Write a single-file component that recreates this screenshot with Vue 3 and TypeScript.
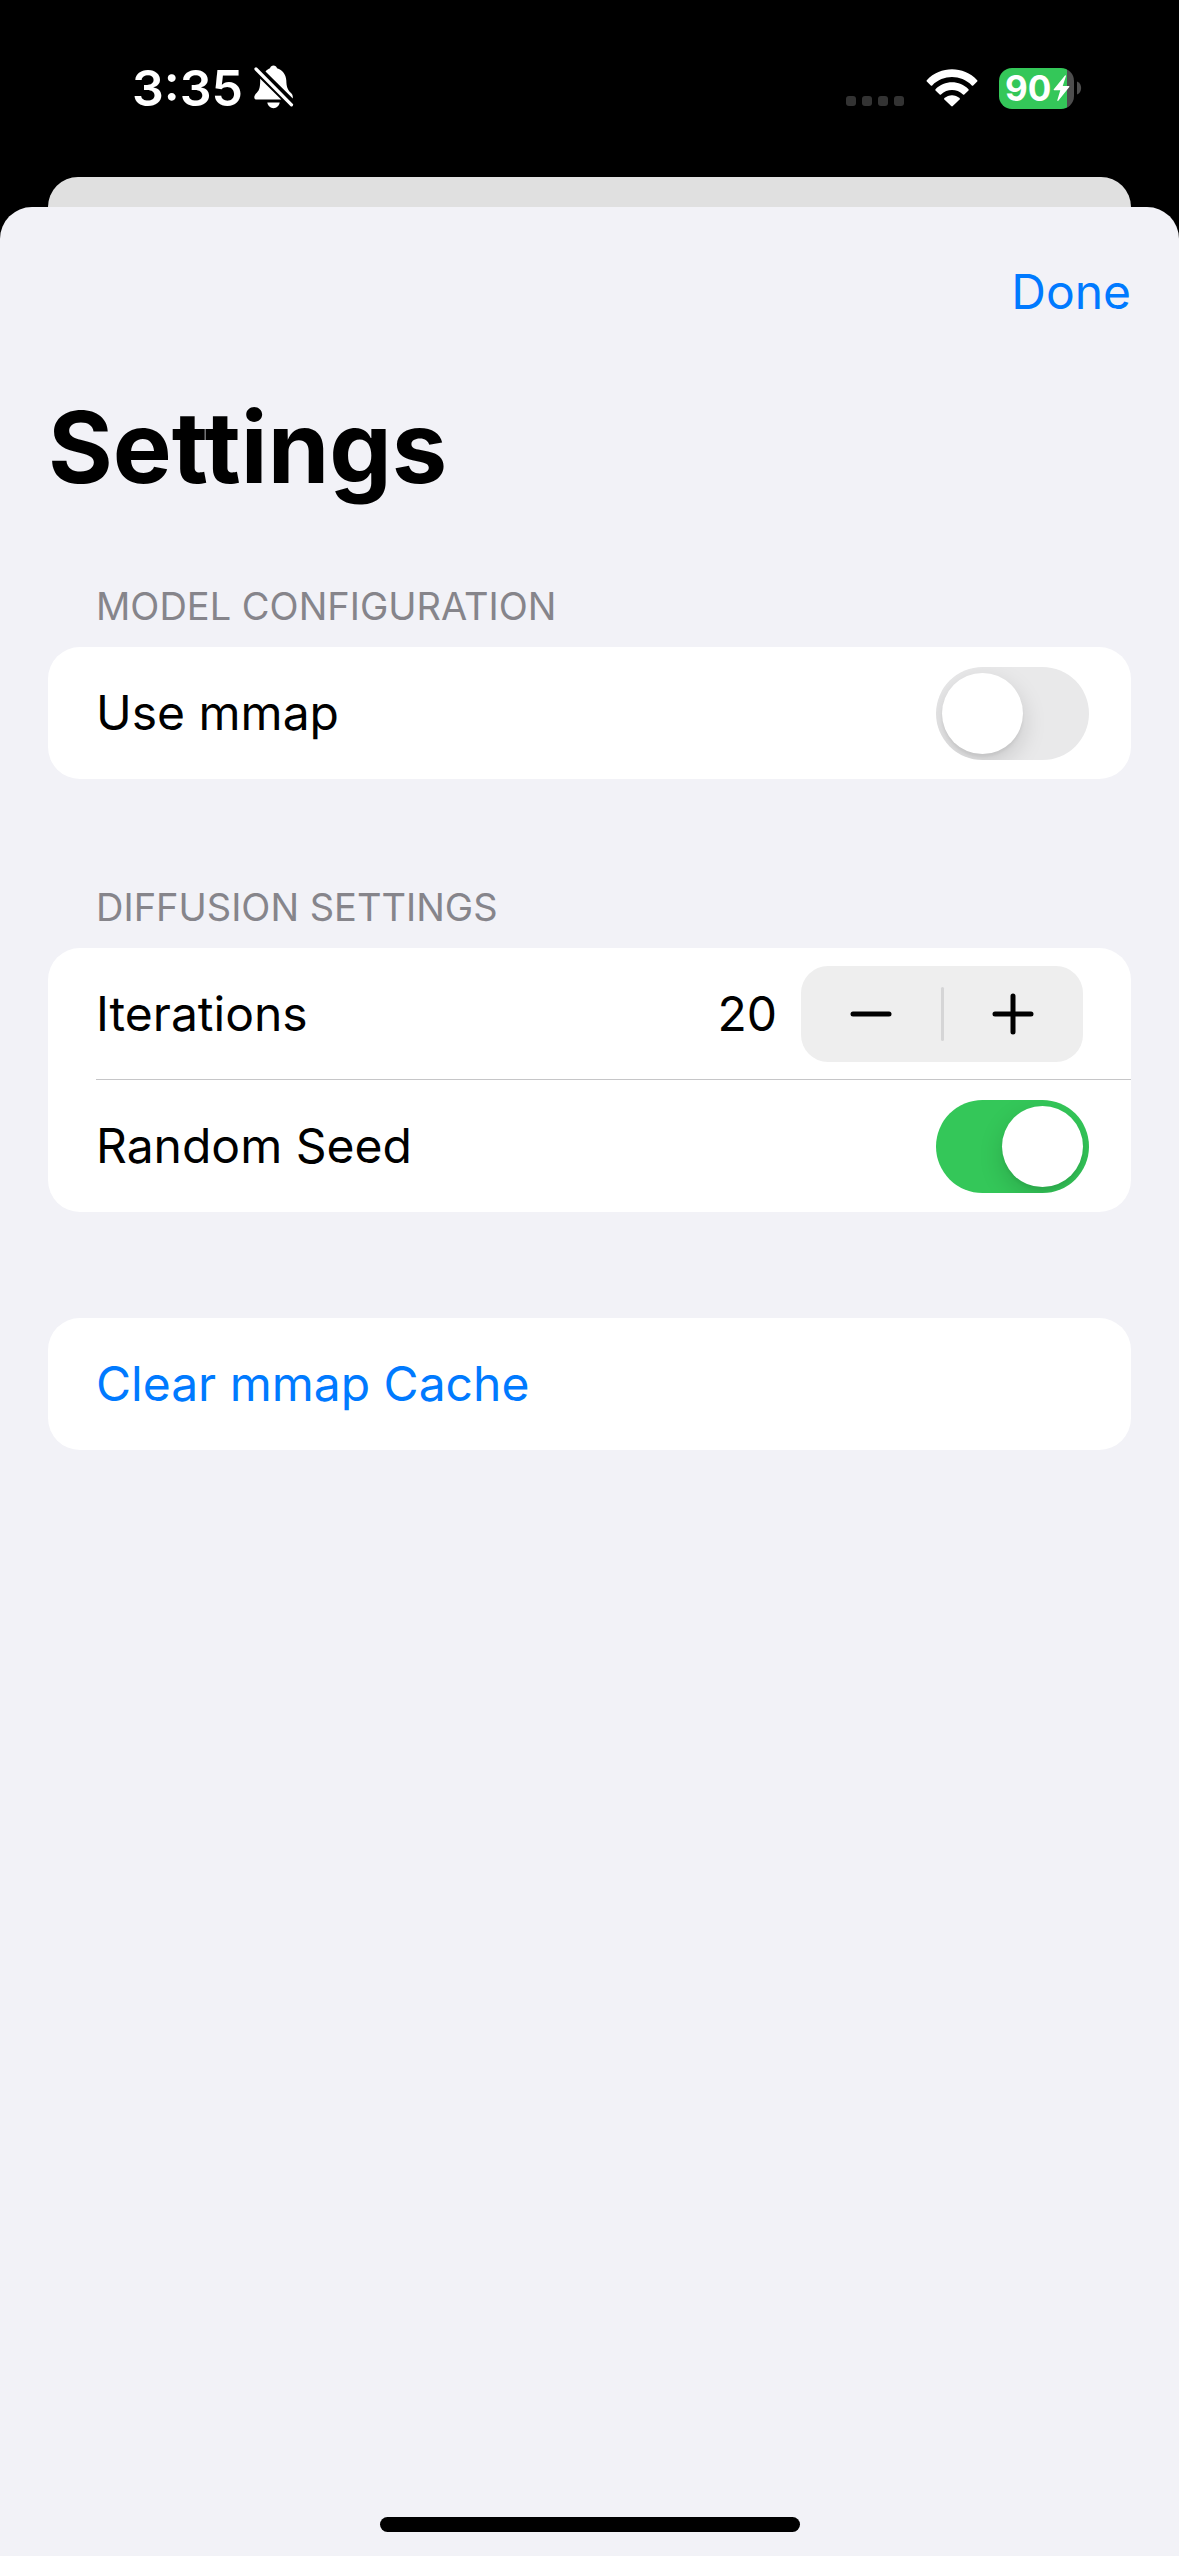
<script setup lang="ts">
import { ref } from 'vue'

const useMmap = ref(false)
const iterations = ref(20)
const randomSeed = ref(true)

function step(delta: number) {
  iterations.value = Math.max(1, iterations.value + delta)
}
</script>

<template>
  <div class="screen">
    <header class="status">
      <div class="status-left">
        <time class="clock">3:35</time>
        <svg class="bell" width="42" height="46" viewBox="0 0 42 46" aria-label="Silent mode">
          <path d="M12.500 6.500C14 4.800 15.500 3.900 17 3.300C17.500 1.500 18.800.600 20.500.600S23.500 1.500 24 3.300C29.500 5 33 9.500 33.300 15.500C33.500 22 34.500 24.500 37.500 27.500C39 29 39.800 30 39.800 32V33.400Z" fill="#fff" />
          <path d="M7.200 13.800L28.200 34.600H4C2 34.600 1.300 33.500 1.300 32.200C1.300 30.500 2.300 29.300 3.800 27.800C6.800 24.800 7.200 21.500 7.200 13.800Z" fill="#fff" />
          <path d="M14.300 37.600H26.700C26.200 41 23.500 43.200 20.500 43.200S14.800 41 14.300 37.600Z" fill="#fff" />
          <path d="M3 4L38.500 39.800" stroke="#fff" stroke-width="3.200" stroke-linecap="round" />
        </svg>
      </div>
      <div class="status-right">
        <div class="dots" aria-hidden="true"><i></i><i></i><i></i><i></i></div>
        <svg class="wifi" width="52" height="38" viewBox="0 0 52 38" aria-label="Wi-Fi">
          <path d="M.800 11.200C14.500-3.300 37.500-3.300 51.200 11.200Q51.700 11.900 51.200 12.500L47.200 16.400Q46.500 17 45.800 16.400C34.700 5.300 17.300 5.300 6.200 16.400Q5.500 17 4.800 16.400L.800 12.500Q.300 11.900.800 11.200Z" fill="#fff" />
          <path d="M9.500 20.200C18.500 11 33.500 11 42.500 20.200Q43 20.900 42.500 21.500L38.300 25.500Q37.600 26 37 25.500C30.800 19.600 21.200 19.600 15 25.500Q14.400 26 13.700 25.500L9.500 21.500Q9 20.900 9.500 20.200Z" fill="#fff" />
          <path d="M18.400 29.100C22.800 25.200 29.200 25.200 33.600 29.100Q34.200 29.800 33.600 30.400L26.800 37.100Q26 37.800 25.200 37.100L18.400 30.400Q17.800 29.800 18.400 29.100Z" fill="#fff" />
        </svg>
        <div class="battery">
          <div class="cell">
            <span class="level">90</span>
            <svg width="17" height="27" viewBox="0 0 17 27" aria-label="Charging">
              <path d="M12 .500L.800 14.200Q.200 15.300 1.300 15.300H7.300L4.300 25.300Q4.300 26.400 5.300 25.800L16.300 12.100Q16.800 11 15.800 11H9.700L13 1Q12.900 0 12 .500Z" fill="#fff" />
            </svg>
          </div>
          <svg class="nub" width="5" height="14" viewBox="0 0 5 14"><path d="M0 .500C5.500 2.500 5.500 11.500 0 13.500Z" fill="#4d4d4d" /></svg>
        </div>
      </div>
    </header>

    <div class="behind"></div>

    <main class="sheet">
      <nav class="toolbar">
        <button type="button" class="done">Done</button>
      </nav>
      <h1>Settings</h1>

      <section class="group">
        <h2>MODEL CONFIGURATION</h2>
        <div class="card">
          <div class="row">
            <label for="use-mmap">Use mmap</label>
            <input id="use-mmap" v-model="useMmap" class="switch" type="checkbox" role="switch" />
          </div>
        </div>
      </section>

      <section class="group">
        <h2>DIFFUSION SETTINGS</h2>
        <div class="card">
          <div class="row iterations">
            <span>Iterations</span>
            <output class="count">{{ iterations }}</output>
            <div class="stepper">
              <button type="button" aria-label="Decrement" @click="step(-1)">
                <svg width="42" height="42" viewBox="0 0 42 42"><path d="M3 21H39" /></svg>
              </button>
              <span class="divider"></span>
              <button type="button" aria-label="Increment" @click="step(1)">
                <svg width="42" height="42" viewBox="0 0 42 42"><path d="M3 21H39M21 3V39" /></svg>
              </button>
            </div>
          </div>
          <div class="row">
            <label for="random-seed">Random Seed</label>
            <input id="random-seed" v-model="randomSeed" class="switch" type="checkbox" role="switch" />
          </div>
        </div>
      </section>

      <section class="group">
        <div class="card">
          <button type="button" class="row action">Clear mmap Cache</button>
        </div>
      </section>

      <div class="home"></div>
    </main>
  </div>
</template>

<style>
body {
  margin: 0;
  background: #000;
}
</style>

<style scoped>
.screen {
  display: flex;
  flex-direction: column;
  min-height: 100vh;
  background: #000;
  color: #000;
  font-family: Inter, "Liberation Sans", sans-serif;
  font-size: 48px;
  line-height: 60px;
}

button {
  padding: 0;
  border: 0;
  background: none;
  color: inherit;
  font: inherit;
  cursor: pointer;
}

svg {
  display: block;
  flex: none;
}

.status {
  display: flex;
  justify-content: space-between;
  box-sizing: border-box;
  height: 177px;
  padding: 58px 97px 0 132px;
  color: #fff;
}

.status-left,
.status-right {
  display: flex;
  align-items: center;
  height: 60px;
}

.status-left {
  gap: 10px;
}

.clock {
  font-size: 50px;
  font-weight: 600;
}

.dots {
  display: flex;
  gap: 6px;
  margin: 26px 22px 0 0;
}

.dots i {
  width: 10px;
  height: 10px;
  border-radius: 3px;
  background: #333;
}

.wifi {
  margin-right: 21px;
}

.battery {
  display: flex;
  align-items: center;
  gap: 3px;
}

.cell {
  display: flex;
  align-items: center;
  box-sizing: border-box;
  width: 75px;
  height: 41px;
  padding-left: 6px;
  gap: 2px;
  border-radius: 13px;
  background: linear-gradient(to right, #34c759 68px, #4d4d4d 68px);
}

.level {
  font-size: 35px;
  font-weight: 700;
  line-height: 40px;
}

.behind {
  height: 30px;
  margin: 0 48px;
  border-radius: 30px 30px 0 0;
  background: #e0e0e0;
}

.sheet {
  display: flex;
  flex: 1;
  flex-direction: column;
  padding: 0 48px 24px;
  border-radius: 32px 32px 0 0;
  background: #f2f2f7;
}

.toolbar {
  display: flex;
  justify-content: flex-end;
  padding: 55px 0 65px;
}

.done,
.action {
  color: #007aff;
}

h1 {
  margin: 0;
  font-size: 99px;
  font-weight: 700;
  line-height: 120px;
}

.group {
  margin-top: 106px;
}

h1 + .group {
  margin-top: 77px;
}

h2 {
  margin: 0 48px;
  padding-bottom: 19px;
  color: #86858b;
  font-size: 38px;
  font-weight: 400;
  line-height: 44px;
}

.card {
  overflow: hidden;
  border-radius: 32px;
  background: #fff;
}

.row {
  display: flex;
  align-items: center;
  justify-content: space-between;
  box-sizing: border-box;
  width: 100%;
  height: 132px;
  padding: 0 42px 0 48px;
}

.iterations {
  padding-right: 48px;
  background: linear-gradient(#c6c6c8, #c6c6c8) 48px 100% / 100% 1px no-repeat;
}

.count {
  margin: 0 24px 0 auto;
}

.switch {
  display: flex;
  box-sizing: border-box;
  width: 153px;
  height: 93px;
  margin: 0;
  padding: 6px;
  overflow: clip;
  appearance: none;
  border-radius: 47px;
  background: #e9e9ea;
  cursor: pointer;
}

.switch::before {
  content: "";
  width: 81px;
  height: 81px;
  border-radius: 50%;
  background: #fff;
  box-shadow: 0 9px 24px rgba(0, 0, 0, 0.15), 0 3px 3px rgba(0, 0, 0, 0.05);
}

.switch:checked {
  justify-content: flex-end;
  background: #34c759;
}

.stepper {
  display: flex;
  align-items: center;
  width: 282px;
  height: 96px;
  border-radius: 27px;
  background: #eee;
}

.stepper button {
  display: flex;
  flex: 1;
  align-items: center;
  justify-content: center;
  height: 100%;
}

.stepper path {
  fill: none;
  stroke: #000;
  stroke-width: 5;
  stroke-linecap: round;
}

.divider {
  width: 3px;
  height: 54px;
  border-radius: 2px;
  background: #d5d5d6;
}

.home {
  width: 420px;
  height: 15px;
  margin: auto auto 0;
  border-radius: 8px;
  background: #000;
}
</style>
